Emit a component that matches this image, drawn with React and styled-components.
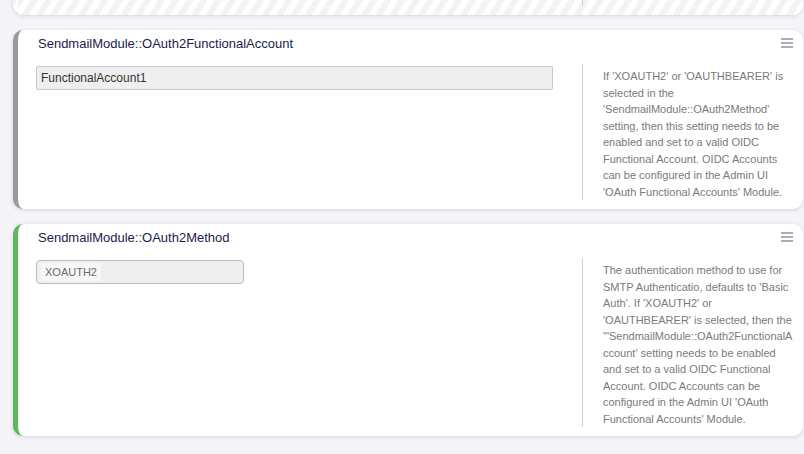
import React from "react";
import styled, { createGlobalStyle } from "styled-components";

const GlobalStyle = createGlobalStyle`
	html, body {
		margin: 0;
		padding: 0;
		background: #f5f5f8;
		font-family: "Liberation Sans", Arial, sans-serif;
		overflow: hidden;
	}
`;

const Page = styled.div`
	display: flex;
	flex-direction: column;
	gap: 15px;
	padding: 0 1px 0 13px;
	height: 454px;
	overflow: hidden;
`;

const Card = styled.div`
	position: relative;
	display: flex;
	flex-direction: column;
	background: ${(p) =>
		p.$disabled
			? "repeating-linear-gradient(122deg, #ffffff 0 6px, #f3f3f5 6px 12px)"
			: "#ffffff"};
	border-left: 5px solid ${(p) => p.$accent || "transparent"};
	border-radius: 10px;
	box-shadow: 0 1px 4px rgba(40, 40, 80, 0.16);
	padding-bottom: 9px;
	margin-top: ${(p) => p.$offset || "0"};
	flex-shrink: 0;
`;

const Header = styled.div`
	display: flex;
	align-items: center;
	justify-content: space-between;
	height: 26px;
	padding: 0 10px 0 20px;
	margin-bottom: 8px;
`;

const Title = styled.h2`
	margin: 0;
	font-size: 13px;
	font-weight: normal;
	color: #1b1b4d;
`;

const Menu = styled.span`
	display: flex;
	flex-direction: column;
	gap: 2px;
	width: 12px;
	margin-top: -1px;
	span {
		height: 2px;
		background: #acacbc;
	}
`;

const Body = styled.div`
	display: grid;
	grid-template-columns: 1fr 221px;
`;

const Main = styled.div`
	padding: 2px 29px 0 18px;
`;

const Help = styled.div`
	border-left: 1px solid #cfcfcf;
	padding: 4px 10px 0 20px;
	font-size: 11px;
	line-height: 16.5px;
	color: #7a7a7a;
	overflow-wrap: anywhere;
`;

const TextInput = styled.div`
	box-sizing: border-box;
	height: 24px;
	display: flex;
	align-items: center;
	padding: 0 4px;
	background: #efefef;
	border: 1px solid #c6c4d8;
	border-radius: 2px;
	font-size: 12px;
	color: #333;
`;

const Select = styled.div`
	box-sizing: border-box;
	width: 208px;
	height: 24px;
	display: flex;
	align-items: center;
	padding: 0 4px;
	background: #efefef;
	border: 1px solid #bab8cf;
	border-radius: 4px;
`;

const Tag = styled.span`
	background: #f7f7f7;
	padding: 3px 4px;
	font-size: 11px;
	color: #6a6a6a;
`;

const Spacer = styled.div`
	height: 40px;
`;

const MenuIcon = () => (
	<Menu>
		<span />
		<span />
		<span />
	</Menu>
);

export default function App() {
	return (
		<>
			<GlobalStyle />
			<Page>
				<Card $disabled $offset="-36px">
					<Body>
						<Main>
							<Spacer />
						</Main>
						<Help style={{ paddingTop: 0, marginTop: -10 }}>
							in Admin Interface configuration.
						</Help>
					</Body>
				</Card>

				<Card $accent="#9a9a9a">
					<Header>
						<Title>SendmailModule::OAuth2FunctionalAccount</Title>
						<MenuIcon />
					</Header>
					<Body>
						<Main>
							<TextInput>FunctionalAccount1</TextInput>
						</Main>
						<Help>
							If 'XOAUTH2' or 'OAUTHBEARER' is selected in the
							'SendmailModule::OAuth2Method' setting, then this setting
							needs to be enabled and set to a valid OIDC Functional
							Account. OIDC Accounts can be configured in the Admin UI
							'OAuth Functional Accounts' Module.
						</Help>
					</Body>
				</Card>

				<Card $accent="#5cb85c">
					<Header>
						<Title>SendmailModule::OAuth2Method</Title>
						<MenuIcon />
					</Header>
					<Body>
						<Main>
							<Select>
								<Tag>XOAUTH2</Tag>
							</Select>
						</Main>
						<Help>
							The authentication method to use for SMTP Authenticatio,
							defaults to 'Basic Auth'. If 'XOAUTH2' or 'OAUTHBEARER' is
							selected, then the "'SendmailModule::OAuth2FunctionalAccount'
							setting needs to be enabled and set to a valid OIDC
							Functional Account. OIDC Accounts can be configured in the
							Admin UI 'OAuth Functional Accounts' Module.
						</Help>
					</Body>
				</Card>
			</Page>
		</>
	);
}
